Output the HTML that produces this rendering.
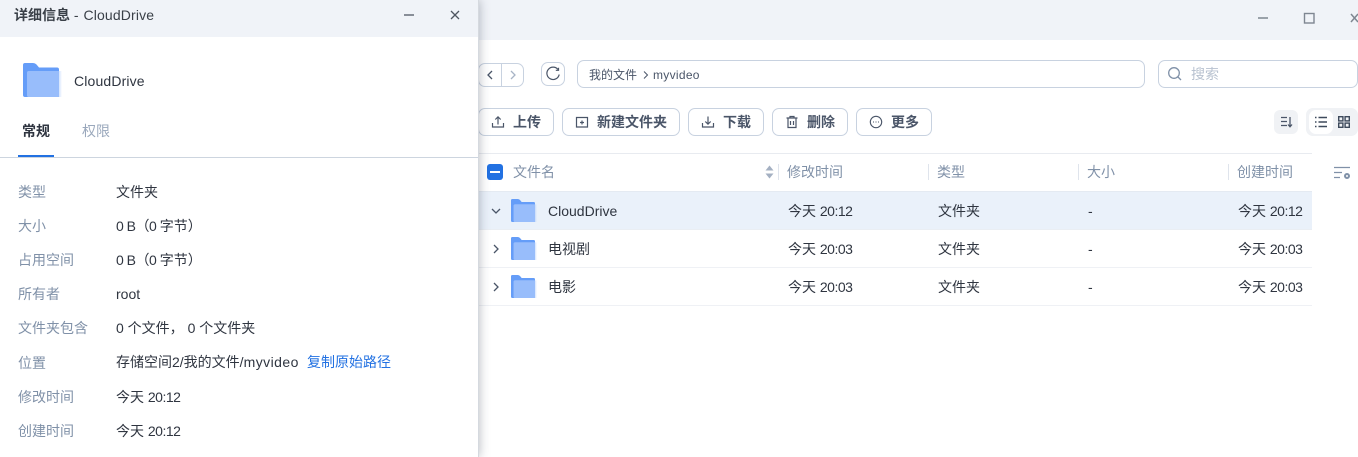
<!DOCTYPE html>
<html lang="zh">
<head>
<meta charset="utf-8">
<title>详细信息 - CloudDrive</title>
<style>
html,body{margin:0;padding:0;width:1358px;height:457px;overflow:hidden;background:#fff;font-family:"Liberation Sans","Noto Sans CJK SC",sans-serif;font-size:14px;color:#2f3540}
.a{position:absolute;white-space:nowrap}
i{font-style:normal;letter-spacing:-.5px}
#bar{position:absolute;left:0;top:0;width:1358px;height:40px;background:#f0f3f8}
.btn{position:absolute;top:108px;height:26px;border:1px solid #c8d2e0;border-radius:7px;background:#fff;box-sizing:content-box}
.btn span{position:absolute;top:0;line-height:26px;font-weight:700;color:#4a5568;font-size:14px;white-space:nowrap}
.btn svg{position:absolute;left:12px;top:6px}
.hd{position:absolute;top:163px;line-height:18px;font-size:14px;color:#8091a8;white-space:nowrap}
.sep{position:absolute;top:164px;width:1px;height:16px;background:#dfe4ec}
.row{position:absolute;left:478px;width:834px;height:37px;border-bottom:1px solid #eff1f5}
.cell{position:absolute;line-height:18px;font-size:14px;color:#2f3540;white-space:nowrap}
#panel{position:absolute;left:0;top:0;width:478px;height:457px;background:#fff;box-shadow:0 0 10px rgba(40,50,70,.35);border-right:1px solid #d5d9df}
#phead{position:absolute;left:0;top:0;width:478px;height:37px;background:#f0f3f8}
.k{position:absolute;left:18px;color:#8091a8;line-height:18px;font-size:14px;white-space:nowrap}
.v{position:absolute;left:116px;color:#2f3540;line-height:18px;font-size:14px;white-space:nowrap}
</style>
</head>
<body>
<svg width="0" height="0" style="position:absolute"><defs>
<linearGradient id="fade" x1="0" x2="1" y1="0" y2="0"><stop offset="0" stop-color="#98bdfb"/><stop offset=".8" stop-color="#98bdfb"/><stop offset="1" stop-color="#98bdfb" stop-opacity="0"/></linearGradient>
<symbol id="folder" viewBox="0 0 39 34" preserveAspectRatio="none">
<path d="M0 2Q0 0 2 0H10Q12 0 13.500 1.500L16 4.500H34Q36 4.500 36 6.500V32Q36 34 34 34H2Q0 34 0 32Z" fill="#659df8"/>
<path d="M36 8H6Q4 8 4 10V32Q4 34 6 34H36Z" fill="#98bdfb"/>
<path d="M6 8H39V34H6Q4 34 4 32V10Q4 8 6 8Z" fill="url(#fade)"/>
</symbol>
</defs></svg>

<div id="bar"></div>
<svg class="a" style="left:1255px;top:11px" width="103" height="14" viewBox="0 0 103 14" fill="none" stroke="#7e8691" stroke-width="1.500">
<path d="M3 7H13"/>
<rect x="49.500" y="2.500" width="9.500" height="9.500" stroke-width="1.400"/>
<path d="M96 3L103 11M103 3L96 11"/>
</svg>

<!-- nav -->
<div class="a" style="left:478px;top:63px;width:44px;height:22px;border:1px solid #c8d2e0;border-radius:7px"></div>
<div class="a" style="left:501px;top:63px;width:1px;height:24px;background:#c8d2e0"></div>
<svg class="a" style="left:486px;top:69px" width="30" height="12" viewBox="0 0 30 12" fill="none" stroke-width="1.300"><path d="M6 2L2 6L6 10" stroke="#4a5568"/><path d="M25 2L29 6L25 10" stroke="#a8b4c6"/></svg>
<div class="a" style="left:541px;top:62px;width:22px;height:22px;border:1px solid #c8d2e0;border-radius:7px"></div>
<svg class="a" style="left:545px;top:66px" width="16" height="16" viewBox="0 0 16 16" fill="none" stroke="#4a5568" stroke-width="1.200"><path d="M13 3.500A6.200 6.200 0 1 0 14.200 8.500"/><path d="M10.800 4.300H13.500V1.800"/></svg>
<div class="a" style="left:577px;top:60px;width:566px;height:26px;border:1px solid #c8d2e0;border-radius:7px"></div>
<div class="a" style="left:589px;top:66px;font-size:12px;line-height:18px;color:#4a5568">我的文件</div>
<svg class="a" style="left:642px;top:70px" width="8" height="10" viewBox="0 0 8 10" fill="none" stroke="#4a5568"><path d="M2 1.500L5.500 5L2 8.500"/></svg>
<div class="a" style="left:653px;top:66px;font-size:12px;line-height:18px;color:#4a5568;letter-spacing:.3px">myvideo</div>

<div class="a" style="left:1158px;top:60px;width:198px;height:26px;border:1px solid #c8d2e0;border-radius:7px"></div>
<svg class="a" style="left:1167px;top:66px" width="16" height="16" viewBox="0 0 16 16" fill="none" stroke="#8091a8" stroke-width="1.300"><circle cx="7" cy="7" r="5.300"/><path d="M11 11L14 14"/></svg>
<div class="a" style="left:1191px;top:65px;font-size:14px;line-height:18px;color:#b8c2d0">搜索</div>

<!-- toolbar -->
<div class="btn" style="left:478px;width:74px"><svg width="14" height="14" viewBox="0 0 14 14" fill="none" stroke="#4a5568" stroke-width="1.200"><path d="M1.500 8V12H12.500V8M7 9.500V2M4.300 4.500L7 1.800L9.700 4.500"/></svg><span style="left:34px">上传</span></div>
<div class="btn" style="left:562px;width:116px"><svg width="14" height="14" viewBox="0 0 14 14" fill="none" stroke="#4a5568" stroke-width="1.200"><path d="M1.500 12V2.500H12.500V12ZM7 5.500V9.500M5 7.500H9"/></svg><span style="left:34px">新建文件夹</span></div>
<div class="btn" style="left:688px;width:74px"><svg width="14" height="14" viewBox="0 0 14 14" fill="none" stroke="#4a5568" stroke-width="1.200"><path d="M1.500 8V12H12.500V8M7 1.500V9M4.300 6.500L7 9.200L9.700 6.500"/></svg><span style="left:34px">下载</span></div>
<div class="btn" style="left:772px;width:74px"><svg width="14" height="14" viewBox="0 0 14 14" fill="none" stroke="#4a5568" stroke-width="1.200"><path d="M1.500 3H12.500M5 3V1.500H9V3M3 3V12.500H11V3M5.500 6V10M8.500 6V10"/></svg><span style="left:34px">删除</span></div>
<div class="btn" style="left:856px;width:74px"><svg width="14" height="14" viewBox="0 0 14 14" fill="none" stroke="#4a5568" stroke-width="1.100"><circle cx="7" cy="7" r="5.700"/><path d="M4.200 7H5M6.600 7H7.400M9 7H9.800" stroke-width="1.300"/></svg><span style="left:34px">更多</span></div>

<div class="a" style="left:1274px;top:110px;width:24px;height:24px;background:#f0f2f5;border-radius:6px"></div>
<svg class="a" style="left:1280px;top:116px" width="13" height="12" viewBox="0 0 13 12" fill="none" stroke="#4a5568" stroke-width="1.300"><path d="M1 1.500H7M1 5.500H7M1 9.500H7M10 1V10M8 8.500L10 10.800L12 8.500"/></svg>
<div class="a" style="left:1306px;top:108px;width:52px;height:28px;background:#f0f2f5;border-radius:7px"></div>
<div class="a" style="left:1309px;top:110px;width:24px;height:24px;background:#fff;border-radius:7px"></div>
<svg class="a" style="left:1315px;top:116px" width="12" height="12" viewBox="0 0 12 12" fill="none" stroke="#3e4a5c" stroke-width="1.400"><path d="M0 1.500H1.500M3.500 1.500H12M0 6H1.500M3.500 6H12M0 10.500H1.500M3.500 10.500H12"/></svg>
<svg class="a" style="left:1338px;top:116px" width="12" height="12" viewBox="0 0 12 12" fill="none" stroke="#3e4a5c" stroke-width="1.400"><rect x=".7" y=".7" width="4.200" height="4.200"/><rect x="7.100" y=".7" width="4.200" height="4.200"/><rect x=".7" y="7.100" width="4.200" height="4.200"/><rect x="7.100" y="7.100" width="4.200" height="4.200"/></svg>

<!-- table -->
<div class="a" style="left:478px;top:153px;width:834px;height:1px;background:#e8ebf0"></div>
<div class="a" style="left:487px;top:164px;width:16px;height:16px;background:#2271e2;border-radius:3px"></div>
<div class="a" style="left:490px;top:171px;width:10px;height:2px;background:#fff"></div>
<div class="hd" style="left:513px">文件名</div>
<svg class="a" style="left:765px;top:165px" width="9" height="14" viewBox="0 0 9 14" fill="#a4b0c2"><path d="M4.500 0.500L8.500 5.500H.5Z"/><path d="M.5 8.500H8.500L4.500 13.500Z"/></svg>
<div class="sep" style="left:778px"></div>
<div class="hd" style="left:787px">修改时间</div>
<div class="sep" style="left:928px"></div>
<div class="hd" style="left:937px">类型</div>
<div class="sep" style="left:1078px"></div>
<div class="hd" style="left:1087px">大小</div>
<div class="sep" style="left:1228px"></div>
<div class="hd" style="left:1237px">创建时间</div>
<svg class="a" style="left:1334px;top:166px" width="17" height="14" viewBox="0 0 17 14" fill="none" stroke="#8091a8" stroke-width="1.200"><path d="M0 1.500H16M0 6.500H8M0 11.500H6"/><circle cx="13" cy="10" r="2" stroke-width="2"/></svg>

<div class="row" style="top:191px;height:38px;background:#eaf1fa;border-bottom:1px solid #eaeef3;border-top:1px solid #e4eaf2;box-sizing:border-box;height:39px"></div>
<div class="row" style="top:230px"></div>
<div class="row" style="top:268px"></div>

<svg class="a" style="left:490px;top:206px" width="12" height="10" viewBox="0 0 12 10" fill="none" stroke="#4a5568" stroke-width="1.300"><path d="M2 3L6 7L10 3"/></svg>
<svg class="a" style="left:491px;top:243px" width="10" height="12" viewBox="0 0 10 12" fill="none" stroke="#4a5568" stroke-width="1.300"><path d="M3 2L7 6L3 10"/></svg>
<svg class="a" style="left:491px;top:281px" width="10" height="12" viewBox="0 0 10 12" fill="none" stroke="#4a5568" stroke-width="1.300"><path d="M3 2L7 6L3 10"/></svg>
<svg class="a" style="left:511px;top:199px" width="26" height="23"><use href="#folder" width="26" height="23"/></svg>
<svg class="a" style="left:511px;top:237px" width="26" height="23"><use href="#folder" width="26" height="23"/></svg>
<svg class="a" style="left:511px;top:275px" width="26" height="23"><use href="#folder" width="26" height="23"/></svg>

<div class="cell" style="left:548px;top:202px">CloudDrive</div>
<div class="cell" style="left:788px;top:202px">今天 <i>20:12</i></div>
<div class="cell" style="left:938px;top:202px">文件夹</div>
<div class="cell" style="left:1088px;top:202px">-</div>
<div class="cell" style="left:1238px;top:202px">今天 <i>20:12</i></div>

<div class="cell" style="left:548px;top:240px">电视剧</div>
<div class="cell" style="left:788px;top:240px">今天 <i>20:03</i></div>
<div class="cell" style="left:938px;top:240px">文件夹</div>
<div class="cell" style="left:1088px;top:240px">-</div>
<div class="cell" style="left:1238px;top:240px">今天 <i>20:03</i></div>

<div class="cell" style="left:548px;top:278px">电影</div>
<div class="cell" style="left:788px;top:278px">今天 <i>20:03</i></div>
<div class="cell" style="left:938px;top:278px">文件夹</div>
<div class="cell" style="left:1088px;top:278px">-</div>
<div class="cell" style="left:1238px;top:278px">今天 <i>20:03</i></div>

<!-- panel -->
<div id="panel">
<div id="phead"></div>
<div class="a" style="left:14px;top:6px;font-size:14px;line-height:18px;color:#3a4048"><b>详细信息</b> - <span style="letter-spacing:.15px;margin-left:1px">CloudDrive</span></div>
<svg class="a" style="left:403px;top:9px" width="62" height="12" viewBox="0 0 62 12" fill="none" stroke="#4f5661" stroke-width="1.300"><path d="M1 6H11" stroke="#6f7680" stroke-width="1.600"/><path d="M48 2L56 10M56 2L48 10"/></svg>
<svg class="a" style="left:23px;top:63px" width="39" height="34"><use href="#folder" width="39" height="34"/></svg>
<div class="a" style="left:74px;top:72px;font-size:14px;line-height:18px;color:#2f3540;letter-spacing:.15px">CloudDrive</div>
<div class="a" style="left:22px;top:122px;font-size:14px;line-height:18px;font-weight:700;color:#2f3540">常规</div>
<div class="a" style="left:82px;top:122px;font-size:14px;line-height:18px;color:#9aa8bc">权限</div>
<div class="a" style="left:0;top:157px;width:478px;height:1px;background:#cdd5df"></div>
<div class="a" style="left:18px;top:155px;width:36px;height:2px;background:#2271e2"></div>

<div class="k" style="top:183px">类型</div><div class="v" style="top:183px">文件夹</div>
<div class="k" style="top:217px">大小</div><div class="v" style="top:217px"><i>0 B（0 </i>字节）</div>
<div class="k" style="top:251px">占用空间</div><div class="v" style="top:251px"><i>0 B（0 </i>字节）</div>
<div class="k" style="top:285px">所有者</div><div class="v" style="top:285px">root</div>
<div class="k" style="top:319px">文件夹包含</div><div class="v" style="top:319px">0 个文件， 0 个文件夹</div>
<div class="k" style="top:354px">位置</div><div class="v" style="top:353px">存储空间2/我的文件/<span style="letter-spacing:.45px">myvideo</span></div>
<div class="a" style="left:307px;top:353px;font-size:14px;line-height:18px;color:#2271e2">复制原始路径</div>
<div class="k" style="top:388px">修改时间</div><div class="v" style="top:388px">今天 <i>20:12</i></div>
<div class="k" style="top:422px">创建时间</div><div class="v" style="top:422px">今天 <i>20:12</i></div>
</div>
</body>
</html>
